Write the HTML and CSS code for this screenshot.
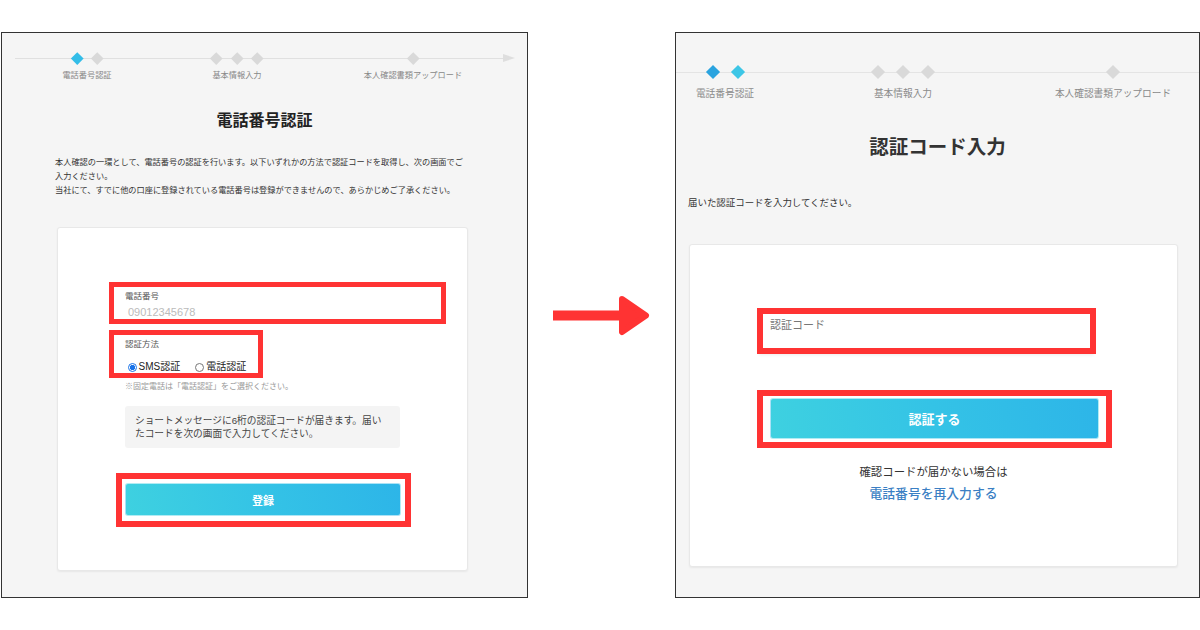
FILE: index.html
```html
<!DOCTYPE html>
<html lang="ja">
<head>
<meta charset="utf-8">
<title>電話番号認証</title>
<link rel="stylesheet" href="styles.css">
</head>
<body>
<div class="page">
  <section class="panel panel-left">
    <div class="stepper stepper-left">
      <div class="step">
        <div class="marks"><span class="dia dia-on"></span><span class="dia"></span></div>
        <div class="step-label">電話番号認証</div>
      </div>
      <div class="step">
        <div class="marks"><span class="dia"></span><span class="dia"></span><span class="dia"></span></div>
        <div class="step-label">基本情報入力</div>
      </div>
      <div class="step">
        <div class="marks"><span class="dia"></span></div>
        <div class="step-label">本人確認書類アップロード</div>
      </div>
    </div>
    <h1 class="title title-left">電話番号認証</h1>
    <p class="desc desc-left">本人確認の一環として、電話番号の認証を行います。以下いずれかの方法で認証コードを取得し、次の画面でご<br>入力ください。<br>当社にて、すでに他の口座に登録されている電話番号は登録ができませんので、あらかじめご了承ください。</p>
    <div class="card card-left">
      <div class="mark-box phone-box">
        <div class="field-label">電話番号</div>
        <div class="placeholder">09012345678</div>
      </div>
      <div class="mark-box method-box">
        <div class="field-label">認証方法</div>
        <div class="radios">
          <span class="radio radio-on"></span><span class="radio-text">SMS認証</span>
          <span class="radio radio-off"></span><span class="radio-text">電話認証</span>
        </div>
      </div>
      <div class="note">※固定電話は「電話認証」をご選択ください。</div>
      <div class="info">ショートメッセージに6桁の認証コードが届きます。届い<br>たコードを次の画面で入力してください。</div>
      <div class="mark-box btn-box-left"><div class="btn btn-left">登録</div></div>
    </div>
  </section>

  <div class="arrow-col">
    <svg class="arrow" width="147" height="50" viewBox="0 0 147 50">
      <rect x="25" y="20.5" width="70" height="10" fill="#ff3333"/>
      <polygon points="94,9 118,25.5 94,42" fill="#ff3333" stroke="#ff3333" stroke-width="6" stroke-linejoin="round"/>
    </svg>
  </div>

  <section class="panel panel-right">
    <div class="stepper stepper-right">
      <div class="step">
        <div class="marks"><span class="dia dia-blue"></span><span class="dia dia-cyan"></span></div>
        <div class="step-label">電話番号認証</div>
      </div>
      <div class="step">
        <div class="marks"><span class="dia"></span><span class="dia"></span><span class="dia"></span></div>
        <div class="step-label">基本情報入力</div>
      </div>
      <div class="step">
        <div class="marks"><span class="dia"></span></div>
        <div class="step-label">本人確認書類アップロード</div>
      </div>
    </div>
    <h1 class="title title-right">認証コード入力</h1>
    <p class="desc desc-right">届いた認証コードを入力してください。</p>
    <div class="card card-right">
      <div class="mark-box code-box">
        <div class="field-label code-label">認証コード</div>
      </div>
      <div class="mark-box btn-box-right"><div class="btn btn-right">認証する</div></div>
      <div class="resend-text">確認コードが届かない場合は</div>
      <div class="resend-link">電話番号を再入力する</div>
    </div>
  </section>
</div>
</body>
</html>
```

FILE: styles.css
```css
* { box-sizing: border-box; }

html, body {
  margin: 0;
  padding: 0;
  background: #ffffff;
}

body {
  font-family: "Liberation Sans", "Noto Sans CJK JP", sans-serif;
  color: #333;
  width: 1200px;
  height: 630px;
  overflow: hidden;
}

.page {
  display: flex;
  align-items: flex-start;
  padding: 32px 0 0 1px;
}

.panel {
  height: 566px;
  background: #f5f5f5;
  border: 1px solid #333;
  display: flex;
  flex-direction: column;
  align-items: flex-start;
}

.panel-left { width: 527px; }
.panel-right { width: 525px; }

.arrow-col {
  width: 147px;
  height: 566px;
  display: flex;
  align-items: center;
}

.arrow { display: block; }

/* stepper */
.stepper {
  position: relative;
  display: grid;
  width: 100%;
}

.stepper::before {
  content: "";
  position: absolute;
  height: 1px;
  background: #e0e0e0;
}

.stepper-left {
  grid-template-columns: 170px 130px 222px;
  padding-top: 20px;
}

.stepper-left::before {
  top: 25px;
  left: 13px;
  width: 492px;
}

.stepper-left::after {
  content: "";
  position: absolute;
  top: 21px;
  left: 501px;
  width: 0;
  height: 0;
  border-left: 12px solid #dedede;
  border-top: 4px solid transparent;
  border-bottom: 4px solid transparent;
}

.stepper-right {
  grid-template-columns: 98px 258px 162px;
  padding-top: 32px;
}

.stepper-right::before {
  top: 39px;
  left: 0;
  right: 0;
  background: #e4e4e4;
}

.step {
  position: relative;
  z-index: 1;
  display: flex;
  flex-direction: column;
  align-items: center;
}

.marks {
  display: flex;
  align-items: center;
  justify-content: center;
}

.stepper-left .marks { height: 10px; gap: 12px; }
.stepper-right .marks { height: 14px; gap: 15px; }

.dia {
  display: block;
  background: #d9d9d9;
  transform: rotate(45deg);
}

.stepper-left .dia { width: 8.5px; height: 8.5px; }
.stepper-right .dia { width: 10px; height: 10px; }

.dia-on { background: #33bde8; }
.dia-blue { background: #2aa3df; }
.dia-cyan { background: #3dc6e6; }

.step-label {
  color: #888;
  white-space: nowrap;
}

.stepper-left .step-label {
  margin-top: 7px;
  font-size: 8.2px;
  line-height: 12px;
}

.stepper-right .step-label {
  margin-top: 8px;
  font-size: 9.7px;
  line-height: 14px;
  color: #8a8a8a;
}

/* titles & descriptions */
.title {
  margin: 0;
  align-self: center;
  font-weight: bold;
  color: #222;
  white-space: nowrap;
}

.title-left {
  margin-top: 28px;
  font-size: 16px;
  line-height: 22px;
}

.title-right {
  margin-top: 33px;
  font-size: 19.5px;
  line-height: 26px;
  color: #333;
}

.desc {
  margin: 0;
  color: #333;
  white-space: nowrap;
}

.desc-left {
  margin-top: 24px;
  margin-left: 53px;
  font-size: 8.2px;
  line-height: 14px;
}

.desc-right {
  margin-top: 36px;
  margin-left: 12px;
  font-size: 9.45px;
  line-height: 14px;
}

/* cards */
.card {
  background: #fff;
  border: 1px solid #e8e8e8;
  border-radius: 3px;
  box-shadow: 0 1px 2px rgba(0, 0, 0, 0.06);
  display: flex;
  flex-direction: column;
  align-items: flex-start;
}

.card-left {
  margin-top: 29px;
  margin-left: 55px;
  width: 411px;
  height: 344px;
}

.card-right {
  margin-top: 34px;
  margin-left: 13px;
  width: 489px;
  height: 323px;
}

/* annotation boxes */
.mark-box {
  border: 5px solid #ff3333;
  background: #fff;
}

.phone-box {
  margin-top: 54px;
  margin-left: 51px;
  width: 337px;
  height: 42px;
  padding: 3px 0 0 11px;
}

.field-label {
  font-size: 8.5px;
  line-height: 12px;
  color: #555;
  white-space: nowrap;
}

.placeholder {
  margin-top: 3px;
  margin-left: 3px;
  font-size: 11px;
  line-height: 14px;
  color: #bbb;
}

.method-box {
  margin-top: 6px;
  margin-left: 51px;
  width: 154px;
  height: 48px;
  padding: 3px 0 0 11px;
}

.radios {
  margin-top: 10px;
  margin-left: 2.5px;
  display: flex;
  align-items: center;
  height: 14px;
}

.radio {
  display: block;
  width: 9px;
  height: 9px;
  border-radius: 50%;
  flex: none;
}

.radio-on {
  border: 1px solid #1a73e8;
  background: radial-gradient(circle, #1a73e8 0 2.6px, #fff 2.9px);
}

.radio-off {
  border: 1px solid #777;
  background: #fff;
  margin-left: 15px;
}

.radio-text {
  margin-left: 2px;
  font-size: 10px;
  line-height: 14px;
  color: #222;
  white-space: nowrap;
}

.note {
  margin-top: 3px;
  margin-left: 67px;
  font-size: 8px;
  line-height: 12px;
  color: #999;
  white-space: nowrap;
}

.info {
  margin-top: 13px;
  margin-left: 67px;
  width: 275px;
  height: 42px;
  padding: 8px 10px;
  background: #f4f4f4;
  border-radius: 3px;
  font-size: 9.7px;
  line-height: 13px;
  color: #444;
  white-space: nowrap;
}

.btn-box-left {
  margin-top: 25px;
  margin-left: 58px;
  width: 295px;
  height: 54px;
  border-width: 6px;
  padding: 4px 3px;
}

.btn {
  display: flex;
  align-items: center;
  justify-content: center;
  color: #fff;
  font-weight: bold;
  border-radius: 3px;
  background: linear-gradient(75deg, #3ed1e0 0%, #34c3e6 50%, #2db5e8 100%);
  border: 1px solid rgba(255, 255, 255, 0.6);
  white-space: nowrap;
}

.btn-left {
  width: 276px;
  height: 33px;
  font-size: 11px;
}

.code-box {
  margin-top: 63px;
  margin-left: 67px;
  width: 339px;
  height: 46px;
  border-width: 6px;
  padding: 4px 0 0 7px;
  box-shadow: 0 3px 3px -2px rgba(0, 0, 0, 0.08);
}

.code-label {
  font-size: 11px;
  line-height: 14px;
  color: #777;
}

.btn-box-right {
  margin-top: 36px;
  margin-left: 67px;
  width: 355px;
  height: 58px;
  border-width: 6px;
  padding: 2px 7px 3px 7px;
}

.btn-right {
  width: 329px;
  height: 41px;
  font-size: 13px;
}

.resend-text {
  align-self: center;
  margin-top: 16px;
  font-size: 11.4px;
  line-height: 16px;
  color: #333;
  white-space: nowrap;
}

.resend-link {
  align-self: center;
  margin-top: 5px;
  font-size: 12.8px;
  line-height: 18px;
  color: #3b7fc4;
  font-weight: 500;
  white-space: nowrap;
}
```
